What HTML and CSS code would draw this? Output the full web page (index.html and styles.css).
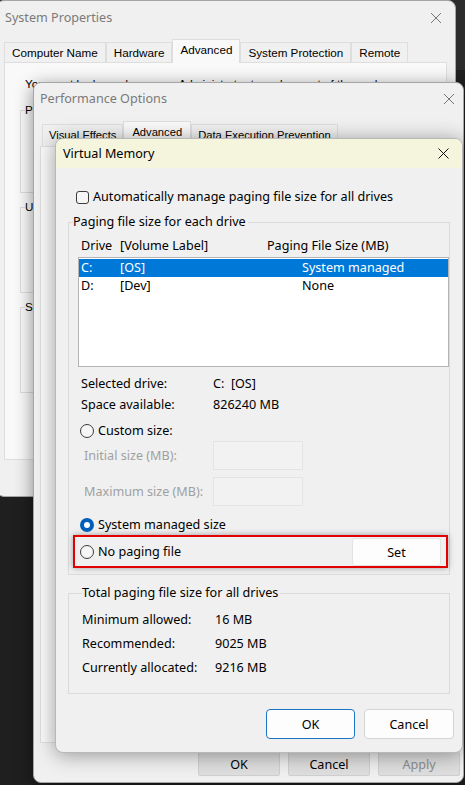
FILE: index.html
```html
<!DOCTYPE html>
<html lang="en">
<head>
  <meta charset="UTF-8" />
  <meta name="viewport" content="width=device-width, initial-scale=1.0" />
  <title>Virtual Memory</title>
  <link rel="stylesheet" href="styles.css">
</head>
<body>
  <div class="desktop">

    <!-- System Properties, behind everything -->
    <div class="window sys-props">
      <div class="titlebar">
        <span class="title">System Properties</span>
        <svg class="close" width="10" height="10" viewBox="0 0 10 10"><path d="M0 0L10 10M10 0L0 10" /></svg>
      </div>
      <div class="tabs">
        <div class="tab">Computer Name</div>
        <div class="tab">Hardware</div>
        <div class="tab active">Advanced</div>
        <div class="tab">System Protection</div>
        <div class="tab">Remote</div>
      </div>
      <div class="tab-page sp-page">
        <p class="note">You must be logged on as an Administrator to make most of these changes.</p>
        <fieldset class="classic-group">
          <legend>Performance</legend>
        </fieldset>
        <fieldset class="classic-group">
          <legend>User Profiles</legend>
        </fieldset>
        <fieldset class="classic-group">
          <legend>Startup and Recovery</legend>
        </fieldset>
      </div>
    </div>

    <!-- Performance Options -->
    <div class="window perf-opts">
      <div class="titlebar">
        <span class="title">Performance Options</span>
        <svg class="close" width="10" height="10" viewBox="0 0 10 10"><path d="M0 0L10 10M10 0L0 10" /></svg>
      </div>
      <div class="tabs">
        <div class="tab">Visual Effects</div>
        <div class="tab active">Advanced</div>
        <div class="tab">Data Execution Prevention</div>
      </div>
      <div class="tab-page po-page"></div>
      <div class="po-buttons">
        <button class="po-btn">OK</button>
        <button class="po-btn">Cancel</button>
        <button class="po-btn disabled">Apply</button>
      </div>
    </div>

    <!-- Virtual Memory, the active dialog -->
    <div class="window virt-mem">
      <div class="titlebar vm-titlebar">
        <span class="title">Virtual Memory</span>
        <svg class="close" width="11" height="11" viewBox="0 0 11 11"><path d="M0.5 0.5L10.5 10.5M10.5 0.5L0.5 10.5" /></svg>
      </div>

      <div class="vm-body">
        <label class="check-row">
          <span class="checkbox"></span>
          Automatically manage paging file size for all drives
        </label>

        <fieldset class="group drives-group">
          <legend>Paging file size for each drive</legend>
          <div class="list-header">
            <span>Drive</span>
            <span>[Volume Label]</span>
            <span>Paging File Size (MB)</span>
          </div>
          <div class="listbox">
            <div class="list-row selected">
              <span>C:</span><span>[OS]</span><span>System managed</span>
            </div>
            <div class="list-row">
              <span>D:</span><span>[Dev]</span><span>None</span>
            </div>
          </div>

          <div class="drive-info">
            <div class="info-row"><span class="label">Selected drive:</span><span>C:&nbsp;&nbsp;[OS]</span></div>
            <div class="info-row"><span class="label">Space available:</span><span>826240 MB</span></div>
          </div>

          <label class="radio-row custom-row">
            <span class="radio"></span>Custom size:
          </label>
          <div class="size-row first">
            <span class="label">Initial size (MB):</span>
            <span class="size-input"></span>
          </div>
          <div class="size-row">
            <span class="label">Maximum size (MB):</span>
            <span class="size-input"></span>
          </div>

          <label class="radio-row managed-row">
            <span class="radio checked"></span>System managed size
          </label>

          <div class="highlight">
            <label class="radio-row">
              <span class="radio"></span>No paging file
            </label>
            <button class="set-btn">Set</button>
          </div>
        </fieldset>

        <fieldset class="group totals-group">
          <legend>Total paging file size for all drives</legend>
          <div class="total-row"><span class="label">Minimum allowed:</span><span>16 MB</span></div>
          <div class="total-row"><span class="label">Recommended:</span><span>9025 MB</span></div>
          <div class="total-row"><span class="label">Currently allocated:</span><span>9216 MB</span></div>
        </fieldset>

        <div class="vm-buttons">
          <button class="vm-btn default">OK</button>
          <button class="vm-btn cancel">Cancel</button>
        </div>
      </div>
    </div>

  </div>
</body>
</html>
```

FILE: styles.css
```css
* {
  box-sizing: border-box;
}

body {
  margin: 0;
  background: #1f1f1f;
  font-family: "Noto Sans", "Liberation Sans", sans-serif;
  font-size: 12.6px;
  color: #000;
}

.desktop {
  position: relative;
  width: 465px;
  height: 785px;
  overflow: hidden;
  background: linear-gradient(#2c2c2c 0, #2c2c2c 70px, #1f1f1f 70px);
}

button {
  font-family: inherit;
  font-size: inherit;
  color: inherit;
}

/* ---------- shared window chrome ---------- */

.window {
  position: absolute;
  display: flex;
  flex-direction: column;
  background: #f0f0f0;
  border: 1px solid #a6a6a6;
  border-radius: 8px;
}

.titlebar {
  display: flex;
  align-items: center;
  justify-content: space-between;
  flex: none;
}

.title {
  color: #7a7a7a;
  line-height: 16px;
}

.close path {
  stroke: #777;
  stroke-width: 1;
  fill: none;
}

.tabs {
  display: flex;
  align-items: flex-end;
  flex: none;
  font-family: "Liberation Sans", Arial, sans-serif;
  font-size: 11.7px;
}

.tab {
  height: 20px;
  padding: 3px 7px 0;
  line-height: 14px;
  border: 1px solid #dedede;
  border-bottom: none;
  background: #f0f0f0;
  white-space: nowrap;
}

.tab.active {
  position: relative;
  z-index: 1;
  height: 24px;
  margin-bottom: -1px;
  background: #f9f9f9;
}

.tab-page {
  background: #f9f9f9;
  border: 1px solid #dedede;
}

/* ---------- System Properties ---------- */

.sys-props {
  left: -4px;
  top: 0;
  width: 460px;
  height: 497px;
  z-index: 1;
}

.sys-props .titlebar {
  height: 34px;
  padding: 0 14px 0 8px;
}

.sys-props .tabs {
  height: 23px;
  margin-top: 4px;
  padding-left: 7px;
}

.sys-props .tab {
  height: 20px;
}

.sys-props .tab.active {
  height: 24px;
}

.sp-page {
  height: 398px;
  margin: 0 8px 0 7px;
  padding: 14px 14px 0 15px;
  font-family: "Liberation Sans", Arial, sans-serif;
  font-size: 11.7px;
}

.note {
  margin: 0 0 0 5px;
  line-height: 14px;
  white-space: nowrap;
}

.classic-group {
  margin: 11px 0 0;
  padding: 6px 8px 0 11px;
  height: 91px;
  border: 1px solid #dcdcdc;
}

.classic-group + .classic-group {
  margin-top: 6px;
  height: 94px;
}

.classic-group legend {
  margin-left: -7px;
  padding: 0 2px 0 0;
  line-height: 16px;
}

/* ---------- Performance Options ---------- */

.perf-opts {
  left: 33px;
  top: 82px;
  width: 431px;
  height: 701px;
  z-index: 2;
  box-shadow: 0 4px 18px rgba(0, 0, 0, 0.45);
}

.perf-opts .titlebar {
  height: 31px;
  padding: 0 9px 0 6px;
}

.perf-opts .tabs {
  height: 25px;
  margin-top: 7px;
  padding-left: 8px;
  font-size: 11.2px;
}

.perf-opts .tab {
  height: 22px;
  padding: 3px 6px 0;
}

.perf-opts .tab.active {
  height: 26px;
  padding: 3px 8px 0;
}

.po-page {
  flex: 1;
  margin: 0 7px 0 6px;
}

.po-buttons {
  display: flex;
  justify-content: flex-end;
  gap: 8px;
  margin-top: 9px;
  padding: 0 3px 6px 0;
}

.po-btn {
  width: 82px;
  height: 24px;
  padding: 0;
  border: 1px solid #cfcfcf;
  border-radius: 2px;
  background: #dedede;
}

.po-btn.disabled {
  color: #8c8c8c;
}

/* ---------- Virtual Memory ---------- */

.virt-mem {
  left: 55px;
  top: 138px;
  width: 408px;
  height: 615px;
  z-index: 3;
  border-color: #b8b8b8;
  box-shadow: 0 2px 20px rgba(0, 0, 0, 0.38);
}

.vm-titlebar {
  height: 29px;
  padding: 0 13px 0 7px;
  background: #f4f5dc;
  border-radius: 7px 7px 0 0;
}

.vm-titlebar .title {
  color: #000;
}

.vm-titlebar .close path {
  stroke: #111;
}

.vm-body {
  display: flex;
  flex-direction: column;
  padding: 0 12px;
  line-height: 16px;
}

.check-row {
  display: flex;
  align-items: center;
  gap: 4px;
  height: 18px;
  margin-top: 20px;
  padding-left: 8px;
}

.checkbox {
  width: 13px;
  height: 13px;
  border: 1px solid #3c3c3c;
  border-radius: 3px;
  background: #f6f6f6;
}

.group {
  margin: 0;
  min-inline-size: 0;
  border: 1px solid #dadada;
}

.group legend {
  padding: 0 2px 0 0;
  line-height: 16px;
}

.drives-group {
  margin-top: 8px;
  padding: 8px 1px 6px 4px;
}

.list-header {
  display: grid;
  grid-template-columns: 39px 147px 1fr;
  height: 16px;
  padding-left: 8px;
}

.listbox {
  height: 110px;
  margin: 3px -1px 0 5px;
  padding-top: 1px;
  background: #fff;
  border: 1px solid #b4b4b4;
}

.list-row {
  display: grid;
  grid-template-columns: 39px 182px 1fr;
  height: 18px;
  padding-left: 2px;
  line-height: 18px;
}

.list-row.selected {
  background: #0078d7;
  color: #fff;
}

.drive-info {
  margin-top: 6px;
}

.info-row {
  display: flex;
  align-items: center;
  height: 21px;
  padding-left: 8px;
}

.info-row .label {
  width: 132px;
}

.radio-row {
  display: flex;
  align-items: center;
  gap: 4px;
  height: 18px;
  padding-left: 7px;
}

.custom-row {
  margin-top: 7px;
}

.managed-row {
  margin-top: 10px;
}

.radio {
  display: flex;
  align-items: center;
  justify-content: center;
  width: 14px;
  height: 14px;
  border: 1px solid #3c3c3c;
  border-radius: 50%;
  background: #f6f6f6;
}

.radio.checked {
  border: none;
  background: #005fb8;
}

.radio.checked::after {
  content: "";
  width: 6px;
  height: 6px;
  border-radius: 50%;
  background: #fff;
}

.size-row {
  display: flex;
  align-items: center;
  height: 29px;
  margin-top: 7px;
  padding-left: 11px;
  color: #a0a0a0;
}

.size-row.first {
  margin-top: 1px;
}

.size-row .label {
  width: 129px;
}

.size-input {
  width: 90px;
  height: 29px;
  border: 1px solid #e4e4e4;
  background: #f2f2f2;
}

.highlight {
  display: flex;
  align-items: center;
  justify-content: space-between;
  height: 33px;
  margin-top: 1px;
  padding: 0 5px 0 3px;
  border: 2px solid #e20000;
  box-shadow: 0 0 6px rgba(0, 0, 0, 0.35);
}

.highlight .radio-row {
  padding-left: 2px;
}

.set-btn {
  width: 89px;
  height: 28px;
  margin-top: 1px;
  padding: 0;
  border: 1px solid #e3e3e3;
  border-radius: 3px;
  background: #fdfdfd;
}

.totals-group {
  margin-top: 10px;
  padding: 7px 0 13px 13px;
}

.total-row {
  display: flex;
  align-items: center;
  height: 24px;
}

.total-row .label {
  width: 133px;
}

.vm-buttons {
  display: flex;
  justify-content: flex-end;
  gap: 9px;
  margin: 15px -4px 0 0;
}

.vm-btn {
  height: 30px;
  padding: 0;
  border: 1px solid #d4d4d4;
  border-radius: 4px;
  background: #fdfdfd;
}

.vm-btn.default {
  width: 89px;
  border-color: #1c74c8;
}

.vm-btn.cancel {
  width: 90px;
}
```
